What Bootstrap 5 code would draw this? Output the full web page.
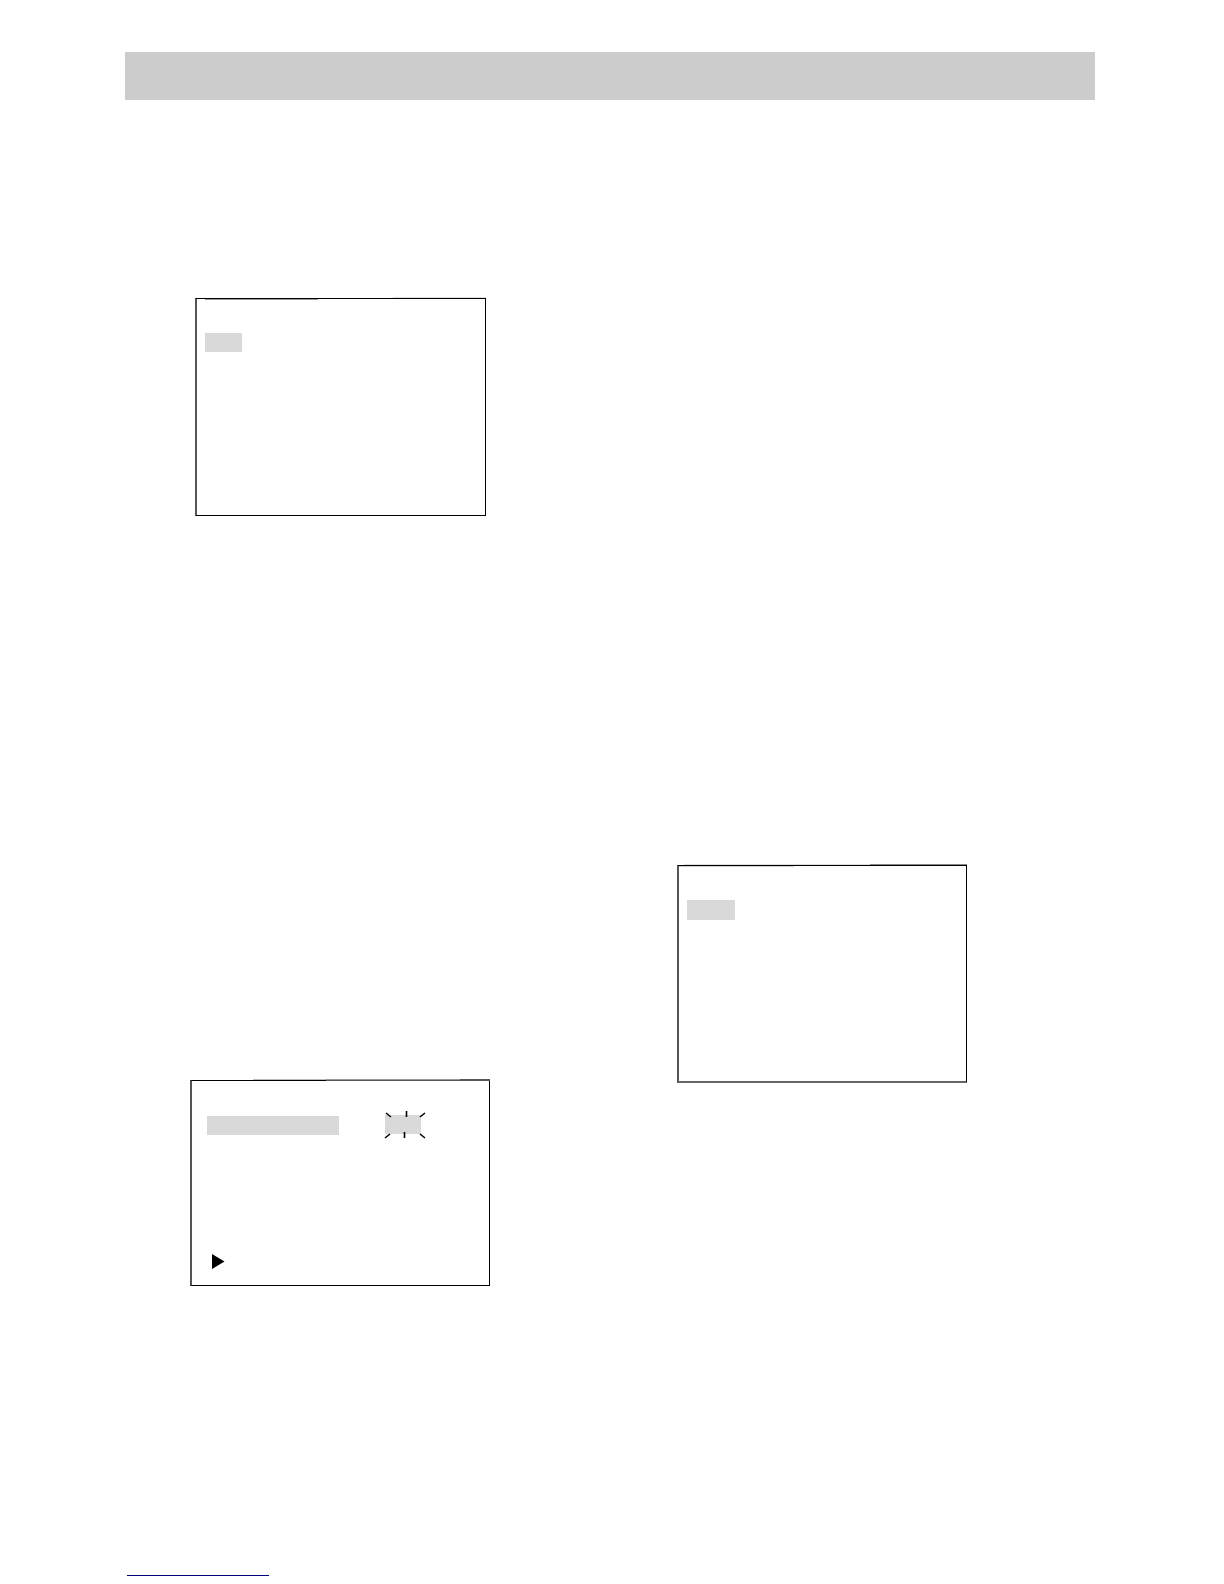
<!DOCTYPE html>
<html lang="en">
<head>
<meta charset="utf-8">
<meta name="viewport" content="width=device-width, initial-scale=1">
<title>Camera menu screens</title>
<link href="https://cdn.jsdelivr.net/npm/bootstrap@5.3.0/dist/css/bootstrap.min.css" rel="stylesheet">
<style>
body { background: #fff; font-family: "Liberation Sans", sans-serif; }
.sheet { padding: 52px 129px 8px 125px; }
.title-band { height: 48px; background: #ccc; }
.first-col { padding: 198px 0 0 65px; }
.second-col { padding: 765px 0 0 67px; }
.osd { max-width: 100%; border: 1px solid #000; border-left: 2px solid #555; }
.osd-menu { width: 291px; height: 218px; margin-left: 5px; padding: 34px 8px; }
.osd-zoom { width: 290px; height: 218px; padding: 34px 8px; border-bottom: 2px solid #666; }
.osd-setup { width: 300px; height: 206px; margin-top: 564px; padding: 34px 15px 16px; }
.edge { left: -2px; top: -2px; }
.pick { background: #d9d9d9; height: 19px; }
.pick-short { width: 37px; }
.pick-medium { width: 48px; height: 20px; }
.pick-long { width: 132px; margin-top: 1px; }
.pick-value { width: 36px; margin-left: 46px; }
.rays { left: -1px; top: -5px; }
.pointer { margin-left: 5px; }
.foot-rule { width: 142px; height: 1px; margin: 289px 0 0 2px; background: #000080; }
</style>
</head>
<body>
<main class="sheet">
  <header class="title-band"></header>
  <div class="row g-0">
    <div class="col-6 first-col">
      <section class="osd osd-menu position-relative">
        <svg class="edge position-absolute" width="291" height="3" shape-rendering="crispEdges" aria-hidden="true">
          <path d="M198 0h93v1h-93z" fill="#ddd"/>
          <path d="M10 2h113v1H10z" fill="#999"/>
        </svg>
        <div class="pick pick-short"></div>
      </section>
      <section class="osd osd-setup position-relative d-flex flex-column justify-content-between">
        <svg class="edge position-absolute" width="300" height="3" shape-rendering="crispEdges" aria-hidden="true">
          <path d="M63 0h73v1H63z" fill="#bbb"/>
          <path d="M136 0h134v1H136z" fill="#999"/>
          <path d="M136 1h164v1H136z" fill="#555"/>
          <path d="M270 0h30v1h-30z" fill="#555"/>
        </svg>
        <div class="d-flex align-items-start">
          <div class="pick pick-long"></div>
          <div class="pick pick-value position-relative">
            <svg class="rays position-absolute" width="42" height="29" fill="none" stroke="#000" stroke-width="1.6" aria-hidden="true">
              <path d="M2 3l5 4M22.500 1v6M41 3l-5 4M1 28l5-4M20.500 22v6M36 24l5 4"/>
            </svg>
          </div>
        </div>
        <svg class="pointer" width="13" height="15" aria-hidden="true"><path d="M0 0l12.500 7.500L0 15z"/></svg>
      </section>
    </div>
    <div class="col-6 second-col">
      <section class="osd osd-zoom position-relative">
        <svg class="edge position-absolute" width="290" height="3" shape-rendering="crispEdges" aria-hidden="true">
          <path d="M7 0h186v1H7z" fill="#ddd"/>
          <path d="M193 0h97v1h-97z" fill="#888"/>
          <path d="M2 2h115v1H2z" fill="#ccc"/>
        </svg>
        <div class="pick pick-medium"></div>
      </section>
    </div>
  </div>
  <div class="foot-rule"></div>
</main>
<script src="https://cdn.jsdelivr.net/npm/bootstrap@5.3.0/dist/js/bootstrap.bundle.min.js"></script>
</body>
</html>
